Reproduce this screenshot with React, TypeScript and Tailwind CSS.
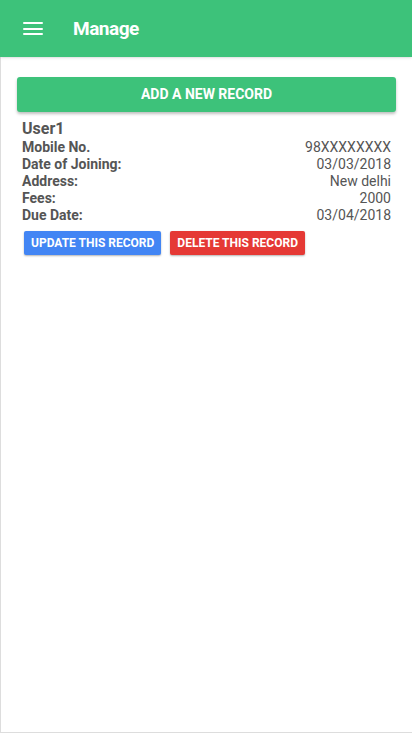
const rows = [
  { label: 'Mobile No.', value: '98XXXXXXXX' },
  { label: 'Date of Joining:', value: '03/03/2018' },
  { label: 'Address:', value: 'New delhi' },
  { label: 'Fees:', value: '2000' },
  { label: 'Due Date:', value: '03/04/2018' },
]

export default function App() {
  return (
    <div className="h-[733px] w-[412px] flex flex-col bg-white font-['Roboto',sans-serif]">
      <header className="h-[57px] shrink-0 bg-[#3dc27a] flex items-center shadow-sm z-10">
        <div className="w-[20px] ml-[23px] flex flex-col gap-[3.5px]">
          <span className="h-[2px] bg-white rounded" />
          <span className="h-[2px] bg-white rounded" />
          <span className="h-[2px] bg-white rounded" />
        </div>
        <h1 className="ml-[30px] mt-[2px] text-white text-[19px] font-bold tracking-tight">Manage</h1>
      </header>

      <main className="flex-1 border-l border-b border-[#dddddd] pt-[20px] px-[16px]">
        <button className="w-full h-[35px] bg-[#3dc27a] text-white text-[14px] font-bold uppercase rounded-[3px] shadow-[0_2px_3px_rgba(0,0,0,0.25)]">
          Add a new record
        </button>

        <div className="px-[5px] mt-[7px] text-[#555555]">
          <div className="text-[16px] font-bold leading-[20px]">User1</div>
          <div className="text-[14px] leading-[17px]">
            {rows.map(r => (
              <div key={r.label} className="flex justify-between">
                <span className="font-bold">{r.label}</span>
                <span>{r.value}</span>
              </div>
            ))}
          </div>
          <div className="flex gap-[9px] mt-[7px] ml-[2px]">
            <button className="h-[24px] px-[7px] bg-[#4285f4] text-white text-[12px] font-bold uppercase rounded-[2px] shadow-[0_1px_2px_rgba(0,0,0,0.3)]">
              Update this record
            </button>
            <button className="h-[24px] px-[7px] bg-[#e53935] text-white text-[12px] font-bold uppercase rounded-[2px] shadow-[0_1px_2px_rgba(0,0,0,0.3)]">
              Delete this record
            </button>
          </div>
        </div>
      </main>
    </div>
  )
}
